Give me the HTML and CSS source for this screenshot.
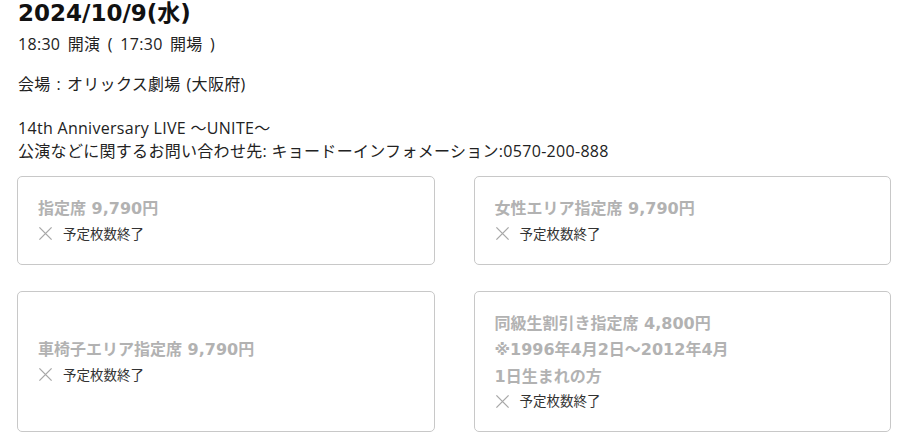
FILE: index.html
```html
<!DOCTYPE html>
<html lang="ja">
<head>
<meta charset="utf-8">
<link rel="stylesheet" href="styles.css">
</head>
<body>
<div class="page">
  <h2 class="date">2024/10/9(水)</h2>
  <p class="time">18:30 開演 ( 17:30 開場 )</p>
  <p class="venue">会場 : オリックス劇場 (大阪府)</p>
  <p class="info">14th Anniversary LIVE ～UNITE～<br>公演などに関するお問い合わせ先: キョードーインフォメーション:0570-200-888</p>
  <div class="grid">
    <div class="card">
      <div class="seat">指定席 9,790円</div>
      <div class="status"><svg class="x" viewBox="0 0 16 16"><path d="M1.5 1.5 L14.5 14.5 M14.5 1.5 L1.5 14.5"/></svg>予定枚数終了</div>
    </div>
    <div class="card">
      <div class="seat">女性エリア指定席 9,790円</div>
      <div class="status"><svg class="x" viewBox="0 0 16 16"><path d="M1.5 1.5 L14.5 14.5 M14.5 1.5 L1.5 14.5"/></svg>予定枚数終了</div>
    </div>
    <div class="card">
      <div class="seat">車椅子エリア指定席 9,790円</div>
      <div class="status"><svg class="x" viewBox="0 0 16 16"><path d="M1.5 1.5 L14.5 14.5 M14.5 1.5 L1.5 14.5"/></svg>予定枚数終了</div>
    </div>
    <div class="card">
      <div class="seat">同級生割引き指定席 4,800円<br>※1996年4月2日～2012年4月<br>1日生まれの方</div>
      <div class="status"><svg class="x" viewBox="0 0 16 16"><path d="M1.5 1.5 L14.5 14.5 M14.5 1.5 L1.5 14.5"/></svg>予定枚数終了</div>
    </div>
  </div>
</div>
</body>
</html>
```
FILE: styles.css
```css
html, body {
  margin: 0;
  padding: 0;
  background: #fff;
}
body {
  font-family: "Open Sans", "Noto Sans CJK JP", sans-serif;
  color: #222;
}
.page {
  padding: 0 19px 0 17px;
}
.date {
  margin: 0;
  font-family: "DejaVu Sans", "Noto Sans CJK JP", sans-serif;
  font-size: 23px;
  line-height: 26px;
  font-weight: 700;
  color: #111;
  padding-left: 1px;
}
.time, .venue, .info {
  font-size: 16px;
  line-height: 23px;
  margin: 0;
  padding-left: 1px;
  letter-spacing: 0.3px;
}
.time {
  margin-top: 7px;
  word-spacing: 3px;
}
.venue {
  margin-top: 17px;
  word-spacing: 1.5px;
}
.info {
  margin-top: 21px;
}
.grid {
  display: grid;
  grid-template-columns: 1fr 1fr;
  column-gap: 39px;
  row-gap: 26px;
  margin-top: 13px;
}
.card {
  border: 1px solid #c8c8c8;
  border-radius: 5px;
  padding: 19px 20px;
  display: flex;
  flex-direction: column;
  justify-content: center;
}
.seat {
  font-family: "DejaVu Sans", "Noto Sans CJK JP", sans-serif;
  font-size: 16px;
  line-height: 26.5px;
  font-weight: 700;
  color: #b2b2b2;
}
.status {
  display: flex;
  align-items: center;
  gap: 10px;
  font-size: 13.5px;
  line-height: 22px;
  color: #333;
}
.x {
  width: 15px;
  height: 15px;
  fill: none;
  stroke: #a8a8a8;
  stroke-width: 1.4;
}
```
